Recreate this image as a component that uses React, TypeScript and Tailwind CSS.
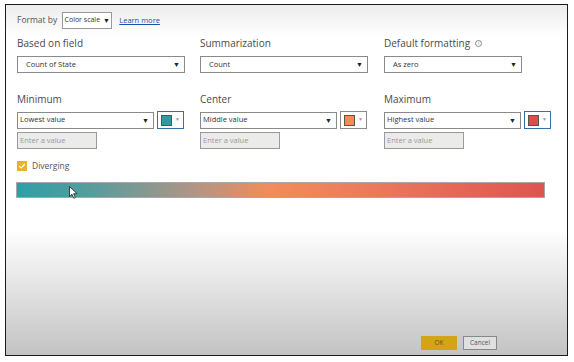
import React from "react";

const Caret = () => <span className="text-[7px] text-[#222] leading-none">▼</span>;

const Select = ({ value, w, pl }: { value: string; w: string; pl: string }) => (
  <div className={`${w} ${pl} h-[17px] border border-[#8a8a8a] bg-white flex items-center justify-between pr-[4px]`}>
    <span className="text-[7.5px] text-[#333] whitespace-nowrap">{value}</span>
    <Caret />
  </div>
);

const Swatch = ({ color, active }: { color: string; active?: boolean }) => (
  <div
    className={`w-[27px] h-[18px] flex items-center gap-[3px] pl-[3px] bg-white border ${
      active ? "border-[#3a6ea8]" : "border-[#8a8a8a]"
    }`}
  >
    <div className="w-[11px] h-[11px] border border-[#555]" style={{ background: color }} />
    <span className="text-[5px] text-[#999]">▼</span>
  </div>
);

const EnterValue = () => (
  <div className="w-[80px] h-[17px] border border-[#9a9a9a] bg-[#ebebea] flex items-center pl-[2px]">
    <span className="text-[7.5px] text-[#999]">Enter a value</span>
  </div>
);

export default function App() {
  const top = [
    { label: "Based on field", value: "Count of State", w: "w-[168px]" },
    { label: "Summarization", value: "Count", w: "w-[168px]" },
    { label: "Default formatting", value: "As zero", w: "w-[138px]", info: true },
  ];
  const ranges = [
    { label: "Minimum", value: "Lowest value", color: "#2c9ca3", active: true },
    { label: "Center", value: "Middle value", color: "#f08c5c" },
    { label: "Maximum", value: "Highest value", color: "#dc4c4c", active: true },
  ];
  return (
    <div className="w-[574px] h-[362px] bg-white pt-[4px] pl-[5px]" style={{ fontFamily: '"Open Sans", "Noto Sans", sans-serif' }}>
      <div className="w-[563px] h-[352px] border border-[#1c1c1c] bg-[linear-gradient(to_bottom,#ececec_0%,#ffffff_9%,#ffffff_64%,#c3c3c3_100%)] flex flex-col pl-[11px] pr-[22px] pt-[7px]">
        <div className="flex items-center h-[17px]">
          <span className="text-[8.5px] text-[#555] mr-[5px]">Format by</span>
          <div className="h-[17px] w-[50px] border border-[#999] bg-white flex items-center justify-center gap-[3px]">
            <span className="text-[7px] text-[#333] whitespace-nowrap">Color scale</span>
            <Caret />
          </div>
          <span className="ml-[7px] text-[7.5px] text-[#1c4fa8] underline">Learn more</span>
        </div>

        <div className="grid grid-cols-[183px_184px_auto] mt-[7px]">
          {top.map((t) => (
            <div key={t.label}>
              <div className="flex items-center gap-[5px] h-[14px]">
                <span className="text-[10px] text-[#4a4a4a]">{t.label}</span>
                {t.info && (
                  <span className="w-[7px] h-[7px] rounded-full border border-[#888] text-[5px] text-[#888] flex items-center justify-center leading-none">i</span>
                )}
              </div>
              <div className="mt-[6px]">
                <Select value={t.value} w={t.w} pl="pl-[8px]" />
              </div>
            </div>
          ))}
        </div>

        <div className="grid grid-cols-[183px_184px_auto] mt-[19px]">
          {ranges.map((r) => (
            <div key={r.label}>
              <div className="h-[14px] flex items-center">
                <span className="text-[10px] text-[#4a4a4a]">{r.label}</span>
              </div>
              <div className="mt-[5px] flex items-center gap-[3px]">
                <Select value={r.value} w="w-[137px]" pl="pl-[2px]" />
                <Swatch color={r.color} active={r.active} />
              </div>
              <div className="mt-[3px]">
                <EnterValue />
              </div>
            </div>
          ))}
        </div>

        <div className="flex items-center gap-[5px] mt-[12px] h-[10px]">
          <div className="w-[10px] h-[10px] bg-[#e8b32a] flex items-center justify-center">
            <svg width="8" height="8" viewBox="0 0 10 10">
              <path d="M1.5 5.2 L4 7.5 L8.5 2.5" stroke="#fff" strokeWidth="1.5" fill="none" />
            </svg>
          </div>
          <span className="text-[8.5px] text-[#555]">Diverging</span>
        </div>

        <div className="mt-[11px] h-[16px] w-[529px] -ml-[1px] border border-[#a8a8a8] bg-[linear-gradient(to_right,#2e9fa7_0%,#5a9c9c_15%,#b89482_35%,#f28c5a_48%,#ec7c5e_65%,#de5550_100%)] relative">
          <svg className="absolute left-[52px] top-[3px]" width="9" height="13" viewBox="0 0 9 13">
            <path d="M0.5 0.5 L0.5 10.5 L3 8.3 L4.8 12.3 L6.3 11.6 L4.6 7.7 L8 7.7 Z" fill="#fff" stroke="#222" strokeWidth="0.8" />
          </svg>
        </div>

        <div className="flex-1" />
        <div className="flex justify-end gap-[6px] mb-[5px] pr-[48px]">
          <div className="w-[36px] h-[14px] bg-[#d4a417] flex items-center justify-center">
            <span className="text-[6.5px] text-[#6b5410]">OK</span>
          </div>
          <div className="w-[34px] h-[14px] border border-[#888] bg-[#e0e0e0] flex items-center justify-center">
            <span className="text-[6.5px] text-[#555]">Cancel</span>
          </div>
        </div>
      </div>
    </div>
  );
}
